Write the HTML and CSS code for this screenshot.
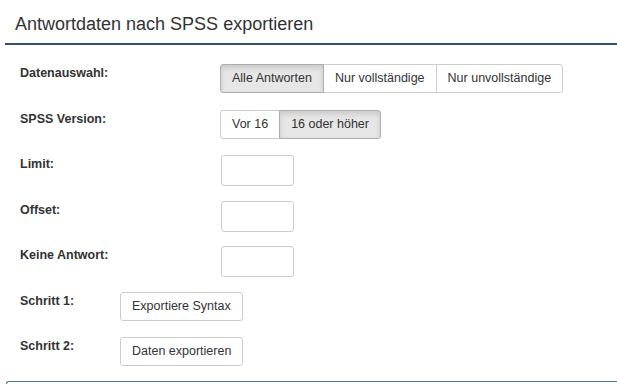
FILE: index.html
```html
<!DOCTYPE html>
<html>
<head>
<meta charset="utf-8">
<link rel="stylesheet" href="styles.css">
</head>
<body>
<div class="page">
  <h1 class="title">Antwortdaten nach SPSS exportieren</h1>
  <div class="form">
    <div class="row">
      <div class="label">Datenauswahl:</div>
      <div class="group">
        <span class="btn active">Alle Antworten</span><span class="btn">Nur vollständige</span><span class="btn">Nur unvollständige</span>
      </div>
    </div>
    <div class="row">
      <div class="label">SPSS Version:</div>
      <div class="group">
        <span class="btn">Vor 16</span><span class="btn active">16 oder höher</span>
      </div>
    </div>
    <div class="row">
      <div class="label">Limit:</div>
      <input class="input" type="text">
    </div>
    <div class="row">
      <div class="label">Offset:</div>
      <input class="input" type="text">
    </div>
    <div class="row">
      <div class="label">Keine Antwort:</div>
      <input class="input" type="text">
    </div>
    <div class="row step">
      <div class="label">Schritt 1:</div>
      <span class="btn single">Exportiere Syntax</span>
    </div>
    <div class="row step last">
      <div class="label">Schritt 2:</div>
      <span class="btn single">Daten exportieren</span>
    </div>
  </div>
  <div class="panel"></div>
</div>
</body>
</html>
```
FILE: styles.css
```css
html, body {
  margin: 0;
  padding: 0;
  background: #fff;
}
body {
  font-family: "Liberation Sans", Arial, sans-serif;
  color: #333;
}
.page {
  padding: 0 0 0 5px;
}
.title {
  margin: 0;
  font-size: 18px;
  font-weight: normal;
  line-height: 20px;
  padding: 14px 0 9px 10px;
  border-bottom: 2px solid #34516f;
  color: #333;
}
.form {
  padding: 19px 0 0 15px;
}
.row {
  display: flex;
  align-items: flex-start;
  height: 45.5px;
}
.row.last {
  height: auto;
}
.label {
  width: 200px;
  font-weight: bold;
  font-size: 12.5px;
  padding-top: 2px;
  line-height: 14px;
}
.step .label {
  width: 100px;
}
.group {
  display: flex;
}
.btn {
  display: inline-block;
  font-size: 12.5px;
  line-height: 15px;
  padding: 6px 11px 6px;
  border: 1px solid #ccc;
  background: #fff;
  color: #333;
  white-space: nowrap;
}
.group .btn + .btn {
  margin-left: -1px;
}
.group .btn:first-child {
  border-radius: 3px 0 0 3px;
}
.group .btn:last-child {
  border-radius: 0 3px 3px 0;
}
.btn.active {
  background: #e6e6e6;
  border-color: #adadad;
  box-shadow: inset 0 3px 5px rgba(0,0,0,0.125);
  position: relative;
  z-index: 1;
}
.btn.single {
  border-radius: 3px;
  padding: 6px 11px;
}
.input {
  box-sizing: border-box;
  width: 73px;
  height: 31px;
  border: 1px solid #ccc;
  border-radius: 3px;
  margin: 0 0 0 1px;
  padding: 0;
}
.panel {
  margin-top: 15px;
  margin-left: 1px;
  height: 2px;
  border-top: 1px solid #4a74a6;
  border-left: 1px solid #4a74a6;
  border-radius: 4px 0 0 0;
}
```
